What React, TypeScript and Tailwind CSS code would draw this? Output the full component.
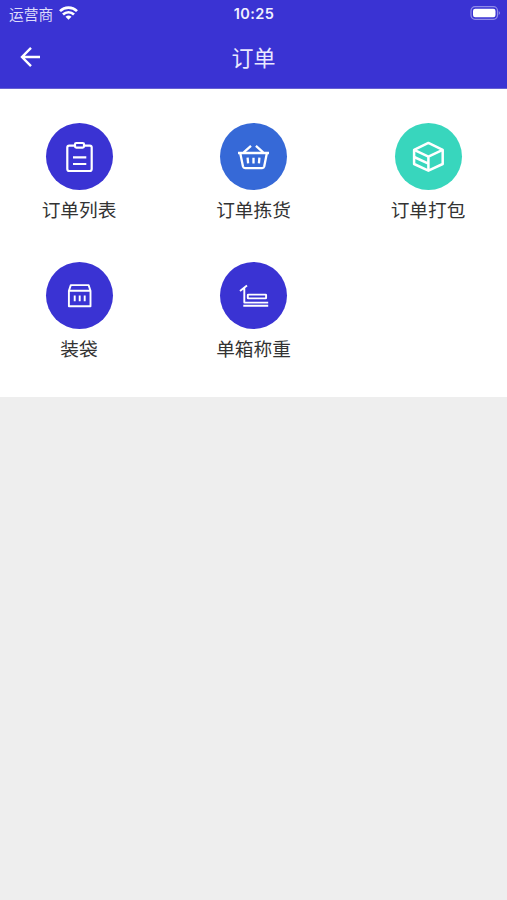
import type { ReactNode } from "react";

type Entry = { label: string; color: string; icon: ReactNode };

const entries: Entry[] = [
  {
    label: "订单列表",
    color: "bg-[#3a33d3]",
    icon: (
      <g strokeWidth="2.200">
        <path d="M29 22.600H23.300a2 2 0 0 0-2 2V46a2 2 0 0 0 2 2h20.400a2 2 0 0 0 2-2V24.600a2 2 0 0 0-2-2H38" />
        <rect x="29" y="20" width="9" height="4.600" rx="1.300" />
        <path d="M27 34.300H40.300M27 41H40.300" />
      </g>
    ),
  },
  {
    label: "订单拣货",
    color: "bg-[#3669d7]",
    icon: (
      <g strokeWidth="2.300">
        <path d="M18 30H49M20.300 30.500L23 43.500Q23.400 45.100 25 45.100H42.200Q43.800 45.100 44.200 43.500L46.800 30.500" />
        <path d="M23.700 29.300L31 22.800M43.200 29.300L35.900 22.800" />
        <path d="M27.600 34.700L28.100 40.400M33.500 34.700V40.400M39.400 34.700L38.900 40.400" />
      </g>
    ),
  },
  {
    label: "订单打包",
    color: "bg-[#38d6bd]",
    icon: (
      <g strokeWidth="2.500">
        <path d="M33.400 19.900L47.700 26.900V41L33.400 47.700L19.100 41V26.900Z" />
        <path d="M19.100 26.900L33.400 33.700L47.700 26.900M33.400 33.700V47.700M19.100 34L33.400 40.700" />
      </g>
    ),
  },
  {
    label: "装袋",
    color: "bg-[#3a33d3]",
    icon: (
      <g strokeWidth="1.900">
        <path d="M22.900 28.800L24.800 23.100H42.600L44.500 28.800V44.200H22.900ZM22.900 28.800H44.500" />
        <path d="M28.700 33.400V39.200M33.700 33.400V39.200M38.700 33.400V39.200" />
      </g>
    ),
  },
  {
    label: "单箱称重",
    color: "bg-[#3a33d3]",
    icon: (
      <g strokeWidth="1.900">
        <path d="M20 29L27 23.600M24.300 26V40.600H48.200M23.300 43.700H48.200" />
        <rect x="27.800" y="32.600" width="18.300" height="3.800" rx="0.500" />
      </g>
    ),
  },
];

function Tile({ label, color, icon }: Entry) {
  return (
    <div className="flex flex-col items-center">
      <div className={`size-[67px] rounded-full ${color}`}>
        <svg
          viewBox="0 0 67 67"
          className="size-full"
          fill="none"
          stroke="#fff"
          strokeLinejoin="round"
        >
          {icon}
        </svg>
      </div>
      <span className="mt-2 text-[18.700px] leading-[26px] whitespace-nowrap text-[#333]">{label}</span>
    </div>
  );
}

function StatusBar() {
  return (
    <div className="grid h-7 grid-cols-3 items-center pr-[6px] pl-[9px]">
      <div className="flex items-center gap-[6px]">
        <span className="pt-px text-[14.700px] leading-5 text-[#dddcfa]">运营商</span>
        <svg viewBox="0 0 19 14" className="-mt-[2px] h-[14px] w-[19px]" fill="none" stroke="#fff" strokeWidth="2.700">
          <path d="M1 5.100C5.700.500 13.300.500 18 5.100M4 8.500C7.200 5.500 11.800 5.500 15 8.500" />
          <path d="M6.500 10.700Q9.500 8.300 12.500 10.700L9.500 13.700Z" fill="#fff" stroke="none" />
        </svg>
      </div>
      <span className="-ml-[2px] text-center text-[14.500px] leading-5 font-semibold tracking-[0.400px] text-[#f1f0ff]">10:25</span>
      <svg viewBox="0 0 31 14" className="-mt-[2px] h-[14px] w-[31px] justify-self-end" fill="none">
        <rect x="1" y="0.700" width="26.500" height="12.600" rx="4" stroke="#908be8" strokeWidth="1.200" />
        <rect x="3" y="2.700" width="22.500" height="8.600" rx="2.200" fill="#fff" />
        <path d="M28.800 5Q30.800 7 28.800 9Z" fill="#a5a1ed" />
      </svg>
    </div>
  );
}

export default function App() {
  return (
    <div className="flex h-[900px] w-full flex-col bg-[#eee] font-['Inter','Noto_Sans_CJK_SC',sans-serif]">
      <header className="h-[89px] border-b border-[#6761d3] bg-[#3a33d3]">
        <StatusBar />
        <div className="grid h-[58px] grid-cols-3 items-center px-5">
          <svg viewBox="0 0 21 20" className="h-5 w-[21px]" fill="none" stroke="#fff" strokeWidth="2.400">
            <path d="M20 10H2M11 .9L2 10L11 19.100" />
          </svg>
          <h1 className="pt-px text-center text-[22px] leading-8 text-[#e9e8ff]">订单</h1>
        </div>
      </header>
      <main className="grid h-[308px] grid-cols-[75px_75px_75px] content-start justify-between gap-y-[37.600px] bg-white px-[41.500px] pt-[34.400px]">
        {entries.map((entry) => (
          <Tile key={entry.label} {...entry} />
        ))}
      </main>
    </div>
  );
}
